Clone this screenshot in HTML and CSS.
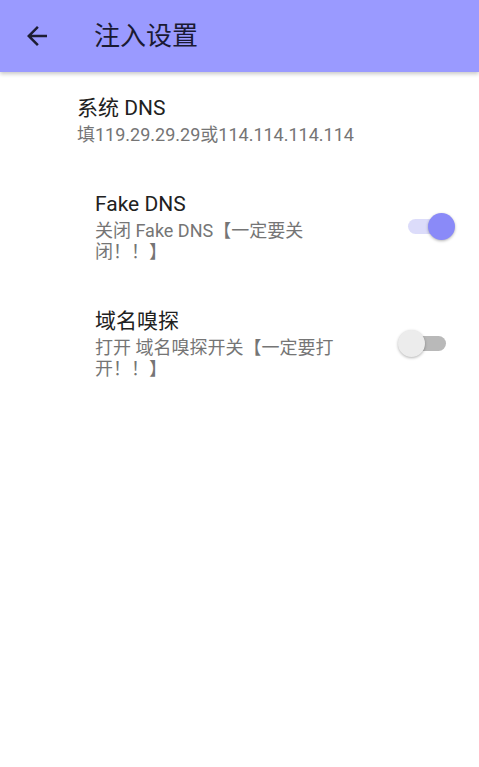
FILE: index.html
```html
<!DOCTYPE html>
<html lang="zh-CN">
<head>
  <meta charset="UTF-8">
  <meta name="viewport" content="width=device-width, initial-scale=1.0">
  <title>注入设置</title>
  <link rel="stylesheet" href="styles.css">
</head>
<body>

<!-- Toolbar -->
<header class="toolbar">
  <svg class="back" viewBox="0 0 24 24" width="30" height="30">
    <path d="M20 11H7.83l5.59-5.59L12 4l-8 8 8 8 1.41-1.41L7.83 13H20v-2z" fill="#1d1d33"/>
  </svg>
  <h1 class="toolbar-title">注入设置</h1>
</header>

<!-- Preference list -->
<main class="prefs">
  <div class="pref pref-top">
    <div class="pref-text">
      <div class="pref-title">系统 DNS</div>
      <div class="pref-summary">填119.29.29.29或114.114.114.114</div>
    </div>
  </div>

  <div class="pref pref-sub">
    <div class="pref-text">
      <div class="pref-title">Fake DNS</div>
      <div class="pref-summary">关闭 Fake DNS【一定要关闭！！】</div>
    </div>
    <span class="switch on"><span class="track"></span><span class="thumb"></span></span>
  </div>

  <div class="pref pref-sub">
    <div class="pref-text">
      <div class="pref-title">域名嗅探</div>
      <div class="pref-summary">打开 域名嗅探开关【一定要打开！！】</div>
    </div>
    <span class="switch"><span class="track"></span><span class="thumb"></span></span>
  </div>
</main>

</body>
</html>
```

FILE: styles.css
```css
body {
  margin: 0;
  background-color: #ffffff;
  font-family: Roboto, "Noto Sans CJK SC", sans-serif;
}

/* Top bar */
.toolbar {
  height: 72px;
  display: flex;
  align-items: center;
  padding-left: 22px;
  background-color: #9a9aff;
  box-shadow: 0 2px 4px rgba(0, 0, 0, 0.22);
}
.back {
  display: block;
  flex-shrink: 0;
}
.toolbar-title {
  margin: 0 0 5px 42px;
  font-size: 26px;
  font-weight: normal;
  color: #1a1a33;
}

/* Preference rows */
.pref {
  display: flex;
  align-items: center;
  padding: 23px 24px 23px 0;
}
.pref-top {
  padding-left: 77px;
}
.pref-sub {
  padding-left: 95px;
}
.pref-text {
  flex: 1;
}
.pref-sub .pref-text {
  max-width: 250px;
}
.pref-title {
  font-size: 21px;
  line-height: 26px;
  color: #212121;
}
.pref-summary {
  margin-top: 3px;
  font-size: 18px;
  line-height: 21px;
  color: #757575;
}

/* Switch */
.switch {
  position: relative;
  width: 57px;
  height: 27px;
  margin-left: auto;
  flex-shrink: 0;
}
.track {
  position: absolute;
  left: 10px;
  top: 6px;
  width: 38px;
  height: 15px;
  border-radius: 8px;
  background-color: #b9b9b9;
}
.thumb {
  position: absolute;
  left: 0;
  top: 0;
  width: 27px;
  height: 27px;
  border-radius: 50%;
  background-color: #ececec;
  box-shadow: 0 1px 3px rgba(0, 0, 0, 0.3);
}
.switch.on .track {
  background-color: #dcdcfa;
}
.switch.on .thumb {
  left: 30px;
  background-color: #8a8af8;
}
```
